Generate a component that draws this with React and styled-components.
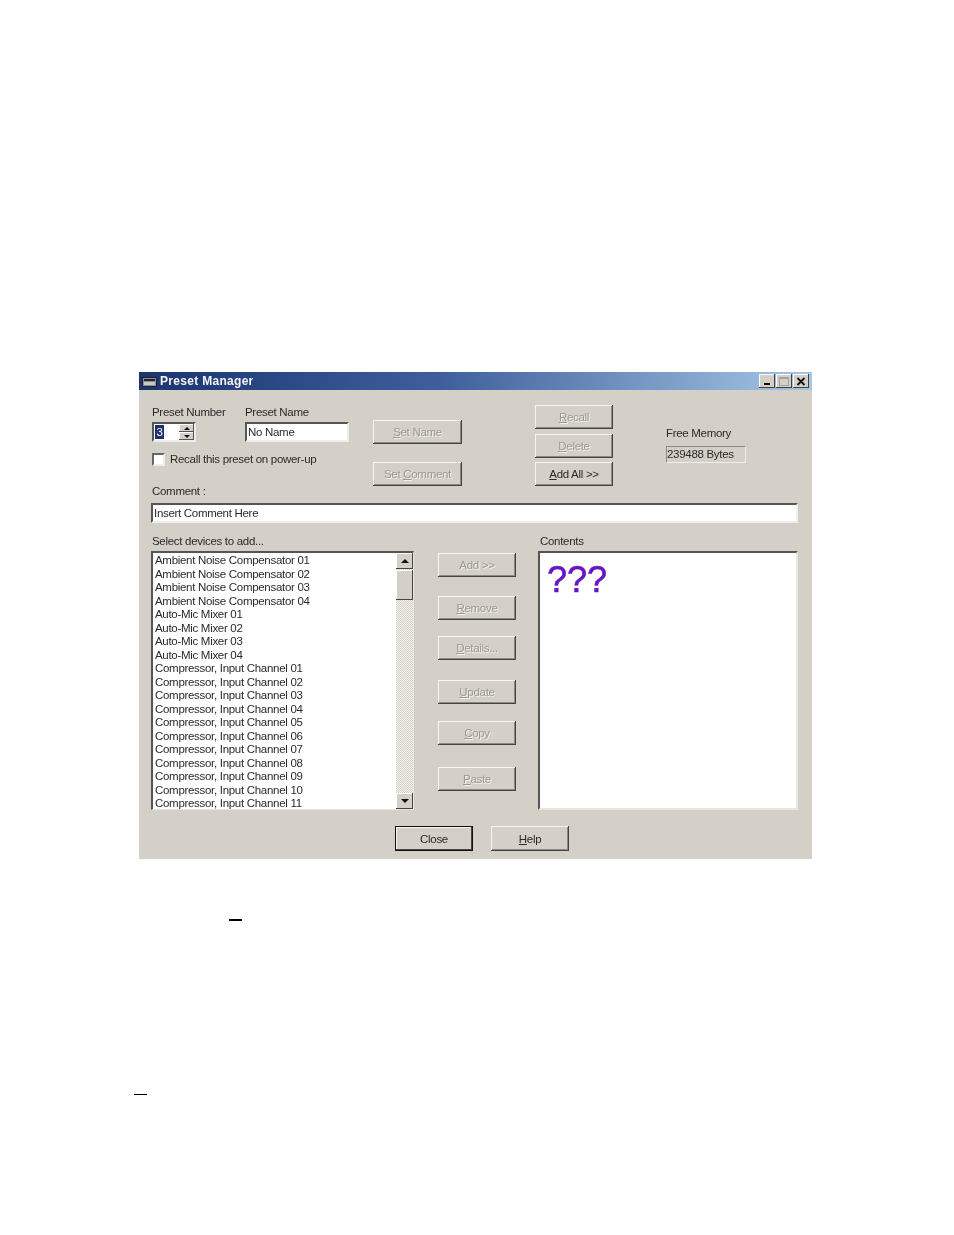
import React from 'react';
import styled, { createGlobalStyle } from 'styled-components';

const Global = createGlobalStyle`
  html, body { margin: 0; padding: 0; background: #fff; }
  body { font-family: "Liberation Sans", Arial, sans-serif; }
`;
const Page = styled.div`
  width: 954px; height: 1235px; padding-top: 372px; box-sizing: border-box; overflow: hidden; background: #fff;
`;
const Win = styled.div`
  margin-left: 139px; width: 673px; height: 487px; background: #d4d0c8; color: #2a2a2a;
  font-size: 11.5px; letter-spacing: -0.3px; filter: blur(0.35px);
`;
const TitleBar = styled.div`
  height: 18px; display: flex; align-items: center; padding: 0 3px;
  background: linear-gradient(90deg, #1a3570 0%, #3f5f9c 45%, #a6c6e6 100%);
`;
const TitleText = styled.span`
  margin-left: 3px; font: bold 12px "Liberation Sans", sans-serif; letter-spacing: 0.3px; color: #f4f4f4; flex: 1;
`;
const CapBtn = styled.span`
  width: 16px; height: 14px; margin-left: 1px; background: #d4d0c8; display: flex; align-items: center; justify-content: center;
  box-shadow: inset -1px -1px #404040, inset 1px 1px #fff;
`;
const Body = styled.div`
  padding: 15px 0 0 12px;
`;
const Top = styled.div`
  display: flex; align-items: flex-start;
`;
const LeftCol = styled.div`
  width: 222px; flex: none;
`;
const Label = styled.div`
  height: 14px; line-height: 14px; white-space: nowrap; padding-left: ${p => p.$pad || 0}px;
`;
const NameRow = styled.div`
  display: flex; gap: 49px; padding-left: 1px;
`;
const NameCol = styled.div`
  display: flex; flex-direction: column; gap: 3px; width: ${p => p.$w}px;
`;
const Spin = styled.div`
  display: flex; height: 20px; width: 44px; background: #fff; box-sizing: border-box;
  border: 2px solid; border-color: #555 #eee #eee #555; padding-left: 0;
`;
const SpinValue = styled.span`
  display: block; width: 9px; height: 14px; margin: 1px 0 0 1px; line-height: 14px; background: #1c2f70; color: #fff; text-align: center;
`;
const SpinBtns = styled.div`
  margin-left: auto; width: 15px; display: flex; flex-direction: column;
`;
const SpinBtn = styled.span`
  flex: 1; background: #d4d0c8; display: flex; align-items: center; justify-content: center;
  box-shadow: inset -1px -1px #555, inset 1px 1px #fff;
`;
const Input = styled.div`
  box-sizing: border-box; height: ${p => p.$h || 20}px; width: ${p => p.$w ? p.$w + 'px' : 'auto'}; background: #fff; line-height: 17px;
  border: 2px solid; border-color: #555 #eee #eee #555; padding-left: 1px; white-space: nowrap;
`;
const CheckRow = styled.div`
  display: flex; align-items: center; gap: 5px; margin-top: 10px; padding-left: 1px; height: 14px; white-space: nowrap;
`;
const Check = styled.span`
  width: 13px; height: 13px; box-sizing: border-box; background: #fff; border: 2px solid; border-color: #666 #eee #eee #666;
`;
const CommentLabel = styled(Label)`
  margin-top: 18px;
`;
const BtnCol = styled.div`
  display: flex; flex-direction: column; flex: none; width: ${p => p.$w}px; margin-left: ${p => p.$ml || 0}px; padding-top: ${p => p.$pt || 0}px;
`;
const Btn = styled.div`
  box-sizing: border-box; flex: none; width: ${p => p.$w || 78}px; height: ${p => p.$h || 24}px; margin-top: ${p => p.$mt || 0}px;
  display: flex; align-items: center; justify-content: center; background: #d4d0c8; white-space: nowrap;
  box-shadow: inset -1px -1px #444, inset 1px 1px #f6f5f2, inset -2px -2px #8c8a84;
  color: ${p => p.$off ? '#9b9992' : '#2a2a2a'};
  text-shadow: ${p => p.$off ? '1px 1px 0 #f2f1ec' : 'none'};
  u { text-underline-offset: 1px; }
`;
const DefaultBtn = styled(Btn)`
  border: 1px solid #111; box-shadow: inset -1px -1px #444, inset 1px 1px #f6f5f2;
`;
const MemCol = styled.div`
  margin-left: 53px; padding-top: 21px; flex: none;
`;
const MemBox = styled.div`
  box-sizing: border-box; margin-top: 6px; width: 80px; height: 17px; line-height: 14px; white-space: nowrap;
  border: 1px solid; border-color: #8c8a84 #f0efea #f0efea #8c8a84; padding-left: 0;
`;
const CommentInput = styled(Input)`
  margin-top: 5px; width: 647px;
`;
const Lists = styled.div`
  display: flex; margin-top: 11px;
`;
const ListCol = styled.div`
  flex: none; width: ${p => p.$w}px; margin-left: ${p => p.$ml || 0}px;
`;
const ListBox = styled.div`
  box-sizing: border-box; display: flex; margin-top: 3px; height: 259px; width: 100%; background: #fff;
  border-style: solid; border-width: 2px 1px 1px 2px; border-color: #555 #e8e6e0 #e8e6e0 #555; overflow: hidden;
`;
const Items = styled.div`
  flex: 1; padding: 0 0 0 2px; overflow: hidden;
`;
const Item = styled.div`
  height: 13.5px; line-height: 14px; white-space: nowrap;
`;
const Scroll = styled.div`
  flex: none; width: 17px; display: flex; flex-direction: column;
  background: repeating-conic-gradient(#d4d0c8 0 25%, #f4f3f0 0 50%) 0 0 / 2px 2px;
`;
const ScrollBtn = styled.div`
  flex: none; height: ${p => p.$h || 16}px; margin-top: ${p => p.$mt || 0}px; background: #d4d0c8; display: flex; align-items: center; justify-content: center;
  box-shadow: inset -1px -1px #444, inset 1px 1px #fff;
`;
const MidCol = styled.div`
  flex: none; width: 78px; margin-left: 24px; padding-top: 19px; display: flex; flex-direction: column;
`;
const Contents = styled(ListBox)`
  display: block; padding: 9px 0 0 7px; border-width: 2px;
`;
const Marks = styled.div`
  font: 36px/36px "Liberation Sans", sans-serif; color: #6a14c8; letter-spacing: 0; -webkit-text-stroke: 0.6px #6a14c8;
`;
const Footer = styled.div`
  display: flex; gap: 18px; margin-top: 16px; padding-left: 244px;
`;
const Rule = styled.div`
  height: ${p => p.$h}px; width: 13px; background: #000; margin-left: ${p => p.$x}px; margin-top: ${p => p.$t}px;
`;

const items = [
  'Ambient Noise Compensator 01','Ambient Noise Compensator 02','Ambient Noise Compensator 03','Ambient Noise Compensator 04',
  'Auto-Mic Mixer 01','Auto-Mic Mixer 02','Auto-Mic Mixer 03','Auto-Mic Mixer 04',
  ...['01','02','03','04','05','06','07','08','09','10','11'].map(n => `Compressor, Input Channel ${n}`),
];

const Tri = ({ up, s = 8 }) => (
  <svg width={s} height={Math.ceil(s / 2)} viewBox="0 0 8 4"><path d={up ? 'M4 0L8 4H0z' : 'M0 0h8L4 4z'} fill="#111" /></svg>
);

export default function App() {
  return (
    <Page>
      <Global />
      <Win>
        <TitleBar>
          <svg width="15" height="11" viewBox="0 0 15 11">
            <rect x="0.5" y="1.5" width="14" height="9" fill="#8a8f9c" stroke="#222" />
            <rect x="2" y="3" width="11" height="2" fill="#222" />
            <rect x="2" y="6" width="11" height="3" fill="#c8c8c8" />
          </svg>
          <TitleText>Preset Manager</TitleText>
          <CapBtn><svg width="8" height="8" viewBox="0 0 8 8"><rect x="1" y="6" width="6" height="2" fill="#111" /></svg></CapBtn>
          <CapBtn><svg width="10" height="9" viewBox="0 0 10 9"><rect x="0.5" y="0.5" width="9" height="8" fill="none" stroke="#a5a39d" /><rect x="0" y="0" width="10" height="2" fill="#a5a39d" /></svg></CapBtn>
          <CapBtn><svg width="10" height="9" viewBox="0 0 10 9"><path d="M1.5 1l7 7M8.5 1l-7 7" stroke="#111" strokeWidth="1.8" /></svg></CapBtn>
        </TitleBar>
        <Body>
          <Top>
            <LeftCol>
              <NameRow>
                <NameCol $w={44}>
                  <Label>Preset Number</Label>
                  <Spin>
                    <SpinValue>3</SpinValue>
                    <SpinBtns>
                      <SpinBtn><Tri up s={6} /></SpinBtn>
                      <SpinBtn><Tri s={6} /></SpinBtn>
                    </SpinBtns>
                  </Spin>
                </NameCol>
                <NameCol $w={104}>
                  <Label>Preset Name</Label>
                  <Input>No Name</Input>
                </NameCol>
              </NameRow>
              <CheckRow><Check />Recall this preset on power-up</CheckRow>
              <CommentLabel $pad={1}>Comment :</CommentLabel>
            </LeftCol>
            <BtnCol $w={89} $pt={15}>
              <Btn $w={89} $off><span><u>S</u>et Name</span></Btn>
              <Btn $w={89} $off $mt={18}><span>Set <u>C</u>omment</span></Btn>
            </BtnCol>
            <BtnCol $w={78} $ml={73}>
              <Btn $off><span><u>R</u>ecall</span></Btn>
              <Btn $off $mt={5}><span><u>D</u>elete</span></Btn>
              <Btn $mt={4}><span><u>A</u>dd All &gt;&gt;</span></Btn>
            </BtnCol>
            <MemCol>
              <Label>Free Memory</Label>
              <MemBox>239488 Bytes</MemBox>
            </MemCol>
          </Top>
          <CommentInput>Insert Comment Here</CommentInput>
          <Lists>
            <ListCol $w={263}>
              <Label $pad={1}>Select devices to add...</Label>
              <ListBox>
                <Items>{items.map(t => <Item key={t}>{t}</Item>)}</Items>
                <Scroll>
                  <ScrollBtn><Tri up /></ScrollBtn>
                  <ScrollBtn $h={30} $mt={1} />
                  <ScrollBtn $mt={193}><Tri /></ScrollBtn>
                </Scroll>
              </ListBox>
            </ListCol>
            <MidCol>
              <Btn $off><span>Add &gt;&gt;</span></Btn>
              <Btn $off $mt={19}><span><u>R</u>emove</span></Btn>
              <Btn $off $mt={16}><span><u>D</u>etails...</span></Btn>
              <Btn $off $mt={20}><span><u>U</u>pdate</span></Btn>
              <Btn $off $mt={17}><span><u>C</u>opy</span></Btn>
              <Btn $off $mt={22}><span><u>P</u>aste</span></Btn>
            </MidCol>
            <ListCol $w={260} $ml={22}>
              <Label $pad={2}>Contents</Label>
              <Contents><Marks>???</Marks></Contents>
            </ListCol>
          </Lists>
          <Footer>
            <DefaultBtn $h={25}><span>Close</span></DefaultBtn>
            <Btn $h={25}><span><u>H</u>elp</span></Btn>
          </Footer>
        </Body>
      </Win>
      <Rule $h={2} $x={229} $t={60} />
      <Rule $h={1} $x={134} $t={173} />
    </Page>
  );
}
